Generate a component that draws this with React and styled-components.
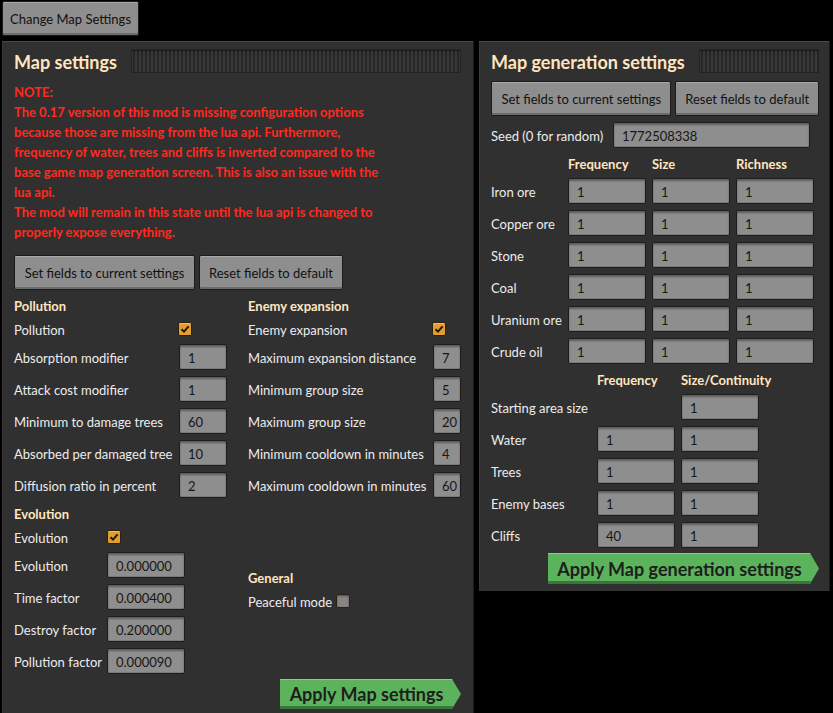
import styled, { createGlobalStyle } from 'styled-components';

const GlobalStyle = createGlobalStyle`
  html, body {
    margin: 0;
    background: #000;
    overflow: hidden;
  }
  body {
    font-family: Lato, 'Liberation Sans', sans-serif;
    font-size: 13px;
    color: #ececec;
  }
  * {
    box-sizing: border-box;
  }
`;

const Page = styled.div`
  padding: 1px 0 0 2px;
  width: 833px;
  height: 713px;
`;

const GrayButton = styled.button`
  width: ${(p) => p.$w}px;
  height: 35px;
  padding: 0;
  background: #8e8e8e;
  color: #111;
  font-family: Lato, 'Liberation Sans', sans-serif;
  font-size: 13px;
  border: 1px solid #1b1b1b;
  border-radius: 2px;
  box-shadow: inset 0 1px 0 #a9a9a9, inset 0 -2px 0 #6c6c6c;
  white-space: nowrap;
  cursor: pointer;
`;

const Panels = styled.div`
  display: flex;
  align-items: flex-start;
  gap: 5px;
  margin-top: 5px;
`;

const Frame = styled.section`
  width: ${(p) => p.$w}px;
  padding: 7px ${(p) => p.$pr}px ${(p) => p.$pb}px 12px;
  background: #313031;
  border-right: 1px solid #1c1b1c;
  box-shadow: inset 0 1px 0 #4a494a, inset 1px 0 0 #3a393a;
`;

const TitleRow = styled.div`
  display: flex;
  align-items: center;
  gap: 14px;
  height: 26px;
`;

const Title = styled.h2`
  margin: 0;
  font-size: 18px;
  font-weight: 700;
  line-height: 26px;
  padding-top: 1px;
  color: #ffe6c0;
  white-space: nowrap;
`;

const Filler = styled.div`
  flex: 1;
  height: 24px;
  background: repeating-linear-gradient(90deg, #3a393a 0 2px, #272627 2px 4px);
  box-shadow: inset 0 0 0 1px #242324, inset 0 2px 2px rgba(0, 0, 0, 0.4);
`;

const Note = styled.div`
  margin-top: 7px;
  padding-top: 1px;
  color: #ff2a1e;
  font-weight: 700;
  font-size: 13px;
  line-height: 20px;
  white-space: nowrap;
`;

const ButtonRow = styled.div`
  display: flex;
  gap: 4px;
  margin-top: ${(p) => p.$mt}px;
`;

const Columns = styled.div`
  display: grid;
  grid-template-columns: 234px 1fr;
  margin-top: 5px;
`;

const Stack = styled.div`
  display: flex;
  flex-direction: column;
  gap: 4px;
`;

const Table = styled.div`
  display: grid;
  grid-template-columns: ${(p) => p.$cols};
  column-gap: ${(p) => p.$gap || 0}px;
  row-gap: 4px;
  align-items: center;
  margin-top: ${(p) => p.$mt || 0}px;
`;

const SectionHeader = styled.div`
  grid-column: ${(p) => p.$col || '1 / -1'};
  height: 20px;
  padding-top: 1px;
  line-height: 20px;
  font-weight: 700;
  color: #ffe6c0;
  white-space: nowrap;
`;

const Label = styled.div`
  height: 20px;
  padding-top: 1px;
  line-height: 20px;
  white-space: nowrap;
`;

const Field = styled.input`
  width: ${(p) => p.$w}px;
  height: 26px;
  margin: 1px 0;
  padding: 1px 0 0 8px;
  grid-column: ${(p) => p.$col || 'auto'};
  background: #8e8e8e;
  color: #161616;
  font-family: Lato, 'Liberation Sans', sans-serif;
  font-size: 13px;
  border: 1px solid #1c1c1c;
  border-radius: 2px;
  box-shadow: inset 0 2px 2px rgba(0, 0, 0, 0.35), inset 0 -1px 0 #7a7a7a;
  outline: none;
`;

const Box = styled.span`
  display: inline-flex;
  align-items: center;
  justify-content: center;
  width: 14px;
  height: 14px;
  margin-left: ${(p) => p.$ml || 0}px;
  background: ${(p) => (p.$on ? '#e59c2b' : '#858585')};
  border: 1px solid #2a2117;
  border-radius: 2px;
  box-shadow: ${(p) =>
    p.$on ? 'inset 0 1px 0 #f3bf63' : 'inset 0 1px 2px rgba(0,0,0,0.45)'};
  vertical-align: middle;
`;

const CheckCell = styled.div`
  height: 20px;
  display: flex;
  align-items: center;
`;

const InlineRow = styled.div`
  grid-column: 1 / -1;
  display: flex;
  align-items: center;
  gap: 4px;
  height: 20px;
`;

const ApplyRow = styled.div`
  display: flex;
  justify-content: flex-end;
  margin-top: 4px;
`;

const ApplyButton = styled.button`
  width: ${(p) => p.$w}px;
  height: ${(p) => p.$h}px;
  padding: 0 8px 0 0;
  background: #5bb35c;
  color: #1e1e1e;
  font-family: Lato, 'Liberation Sans', sans-serif;
  font-size: 18px;
  font-weight: 700;
  border: none;
  clip-path: polygon(0 0, calc(100% - 9px) 0, 100% 50%, calc(100% - 9px) 100%, 0 100%);
  box-shadow: inset 0 1px 0 #86d084, inset 0 -3px 0 #37773a;
  white-space: nowrap;
  cursor: pointer;
`;

const Check = ({ on, ml }) => (
  <Box $on={on} $ml={ml}>
    {on && (
      <svg width="10" height="10" viewBox="0 0 10 10">
        <polyline points="1.5,5.2 4,7.6 8.6,2.4" fill="none" stroke="#1a1a1a" strokeWidth="2" />
      </svg>
    )}
  </Box>
);

const noteLines = [
  'NOTE:',
  'The 0.17 version of this mod is missing configuration options',
  'because those are missing from the lua api. Furthermore,',
  'frequency of water, trees and cliffs is inverted compared to the',
  'base game map generation screen. This is also an issue with the',
  'lua api.',
  'The mod will remain in this state until the lua api is changed to',
  'properly expose everything.',
];

const pollution = [
  ['Absorption modifier', '1'],
  ['Attack cost modifier', '1'],
  ['Minimum to damage trees', '60'],
  ['Absorbed per damaged tree', '10'],
  ['Diffusion ratio in percent', '2'],
];

const evolution = [
  ['Evolution', '0.000000'],
  ['Time factor', '0.000400'],
  ['Destroy factor', '0.200000'],
  ['Pollution factor', '0.000090'],
];

const expansion = [
  ['Maximum expansion distance', '7'],
  ['Minimum group size', '5'],
  ['Maximum group size', '20'],
  ['Minimum cooldown in minutes', '4'],
  ['Maximum cooldown in minutes', '60'],
];

const resources = ['Iron ore', 'Copper ore', 'Stone', 'Coal', 'Uranium ore', 'Crude oil'];

const terrain = [
  ['Water', '1', '1'],
  ['Trees', '1', '1'],
  ['Enemy bases', '1', '1'],
  ['Cliffs', '40', '1'],
];

const ValueRows = ({ rows, w }) =>
  rows.map(([label, value]) => [
    <Label key={label + 'l'}>{label}</Label>,
    <Field key={label + 'f'} $w={w} readOnly value={value} />,
  ]);

const FieldButtons = ({ mt }) => (
  <ButtonRow $mt={mt}>
    <GrayButton $w={181}>Set fields to current settings</GrayButton>
    <GrayButton $w={144}>Reset fields to default</GrayButton>
  </ButtonRow>
);

export default function App() {
  return (
    <Page>
      <GlobalStyle />
      <GrayButton $w={137}>Change Map Settings</GrayButton>
      <Panels>
        <Frame $w={472} $pr={12} $pb={10}>
          <TitleRow>
            <Title>Map settings</Title>
            <Filler />
          </TitleRow>
          <Note>
            {noteLines.map((line) => (
              <div key={line}>{line}</div>
            ))}
          </Note>
          <FieldButtons mt={13} />
          <Columns>
            <Stack>
              <Table $cols="165px 48px">
                <SectionHeader>Pollution</SectionHeader>
                <Label>Pollution</Label>
                <CheckCell>
                  <Check on ml={-1} />
                </CheckCell>
                <ValueRows rows={pollution} w={48} />
              </Table>
              <Table $cols="93px 78px">
                <SectionHeader>Evolution</SectionHeader>
                <Label>Evolution</Label>
                <CheckCell>
                  <Check on />
                </CheckCell>
                <ValueRows rows={evolution} w={78} />
              </Table>
            </Stack>
            <Stack>
              <Table $cols="185px 28px">
                <SectionHeader>Enemy expansion</SectionHeader>
                <Label>Enemy expansion</Label>
                <CheckCell>
                  <Check on ml={-1} />
                </CheckCell>
                <ValueRows rows={expansion} w={28} />
              </Table>
              <Table $cols="1fr" $mt={64}>
                <SectionHeader>General</SectionHeader>
                <InlineRow>
                  <Label>Peaceful mode</Label>
                  <Check />
                </InlineRow>
              </Table>
            </Stack>
          </Columns>
          <ApplyRow>
            <ApplyButton $w={181} $h={30}>Apply Map settings</ApplyButton>
          </ApplyRow>
        </Frame>

        <Frame $w={351} $pr={10} $pb={7}>
          <TitleRow>
            <Title>Map generation settings</Title>
            <Filler />
          </TitleRow>
          <FieldButtons mt={7} />
          <Table $cols="122px 197px" $mt={5}>
            <Label>Seed (0 for random)</Label>
            <Field $w={197} readOnly value="1772508338" />
          </Table>
          <Table $cols="71px 78px 78px 78px" $gap={6} $mt={4}>
            <SectionHeader $col="2">Frequency</SectionHeader>
            <SectionHeader $col="3">Size</SectionHeader>
            <SectionHeader $col="4">Richness</SectionHeader>
            {resources.map((name) => [
              <Label key={name}>{name}</Label>,
              <Field key={name + 'f'} $w={78} readOnly value="1" />,
              <Field key={name + 's'} $w={78} readOnly value="1" />,
              <Field key={name + 'r'} $w={78} readOnly value="1" />,
            ])}
          </Table>
          <Table $cols="100px 78px 78px" $gap={6} $mt={4}>
            <SectionHeader $col="2">Frequency</SectionHeader>
            <SectionHeader $col="3">Size/Continuity</SectionHeader>
            <Label>Starting area size</Label>
            <Field $col="3" $w={78} readOnly value="1" />
            {terrain.map(([name, freq, size]) => [
              <Label key={name}>{name}</Label>,
              <Field key={name + 'f'} $w={78} readOnly value={freq} />,
              <Field key={name + 's'} $w={78} readOnly value={size} />,
            ])}
          </Table>
          <ApplyRow>
            <ApplyButton $w={271} $h={31}>Apply Map generation settings</ApplyButton>
          </ApplyRow>
        </Frame>
      </Panels>
    </Page>
  );
}
